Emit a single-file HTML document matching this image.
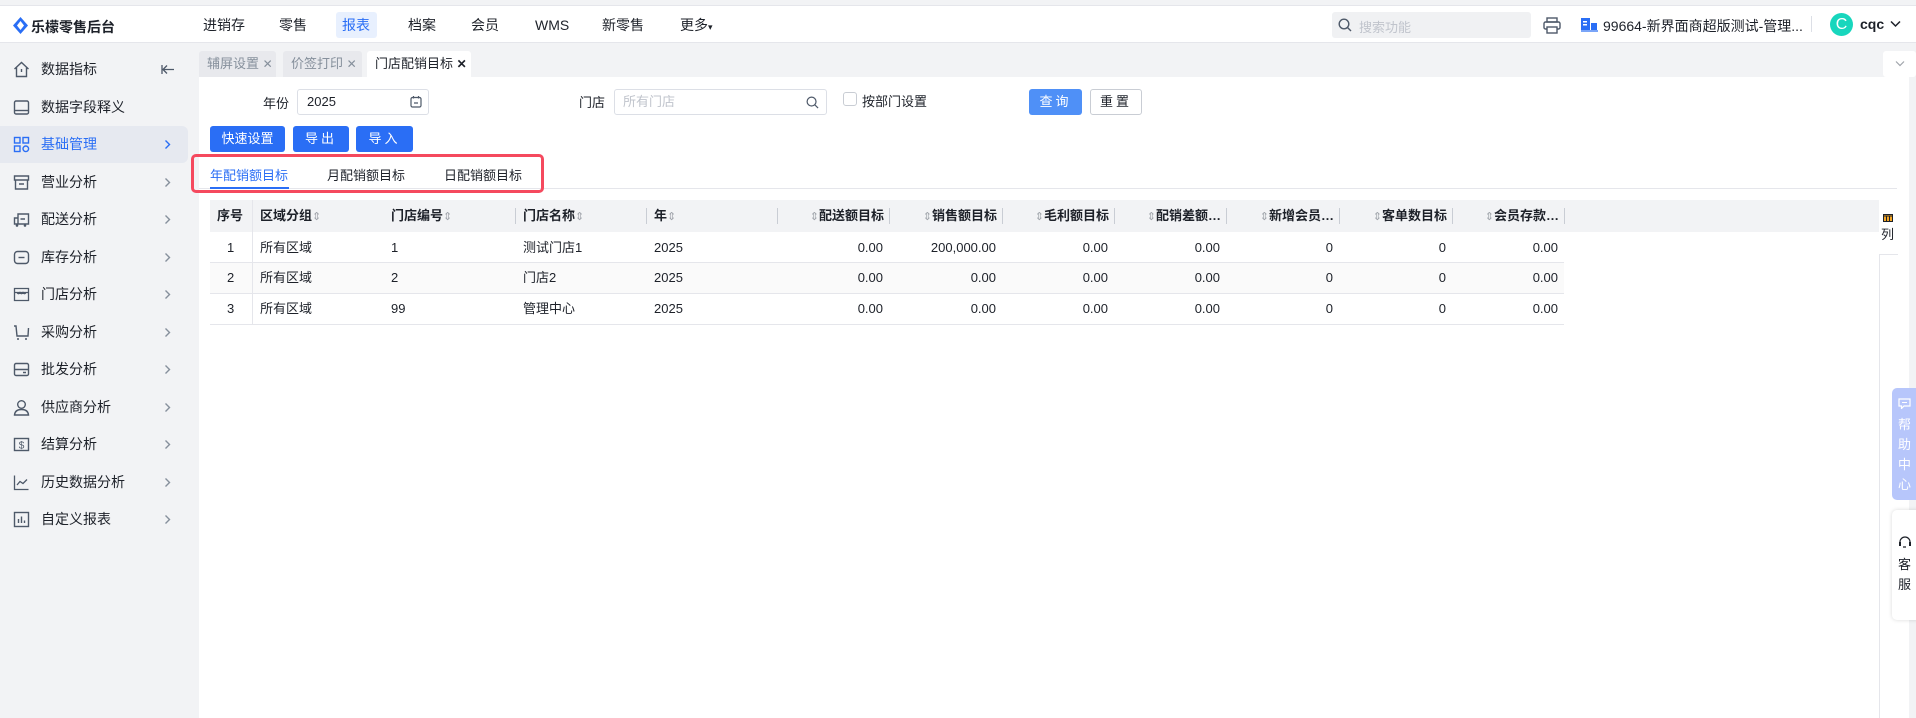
<!DOCTYPE html>
<html><head><meta charset="utf-8"><style>
*{margin:0;padding:0;box-sizing:border-box}
body{width:1916px;height:718px;overflow:hidden;background:#f2f3f5;font-family:"Liberation Sans","Noto Sans CJK SC",sans-serif;color:#1d2129;font-size:13px;position:relative}
.a{position:absolute}
.top{left:0;top:5px;width:1916px;height:38px;background:#fff;border-top:1px solid #e5e6eb;border-bottom:1px solid #e5e6eb}
.nav{top:17px;font-size:14px;color:#1d2129;line-height:16px}
.side{left:0;width:188px;height:37px;font-size:14px;line-height:37px}
.side span.t{position:absolute;left:41px}
.side .ch{position:absolute;left:164px;top:13px;width:7px;height:11px}
.ic{position:absolute;left:13px;top:10px;width:17px;height:17px}
.ptab{top:51px;height:26px;line-height:26px;font-size:13px;padding-left:8px;color:#86909c;background:#e8e9ed;border-radius:3px 3px 0 0}
.btn{top:126px;height:26px;line-height:26px;background:#2a6ef5;color:#fff;border-radius:3px;text-align:center;font-size:13px}
.th{top:200px;height:32px;line-height:32px;font-weight:bold;font-size:13px}
.td{height:31px;line-height:31px;font-size:13px}
.r{text-align:right}
.so{color:#a0a4ab;font-weight:normal;font-size:11px}
.dv{top:208px;width:1px;height:16px;background:#c9cdd4}
</style></head><body>
<svg width="0" height="0" style="position:absolute"><defs><symbol id="chv" viewBox="0 0 7 11"><path d="M1.5 1.5L5.5 5.5 1.5 9.5" fill="none" stroke="#86909c" stroke-width="1.4"/></symbol><symbol id="chvb" viewBox="0 0 7 11"><path d="M1.5 1.5L5.5 5.5 1.5 9.5" fill="none" stroke="#2a6ef5" stroke-width="1.4"/></symbol></defs></svg>
<div class="a top"></div>
<svg class="a" style="left:13px;top:17px" width="15" height="17" viewBox="0 0 15 17"><path d="M7.5 0L15 8.5 7.5 17 0 8.5Z" fill="#2a6ef5"/><path d="M7.5 4L11 8.5 7.5 13 4 8.5Z" fill="#fff"/></svg>
<div class="a" style="left:31px;top:17px;font-size:14px;font-weight:bold;color:#1d2129">乐檬零售后台</div>
<div class="a nav" style="left:203px">进销存</div>
<div class="a nav" style="left:279px">零售</div>
<div class="a" style="left:336px;top:12px;width:41px;height:26px;background:#e8f0fe;border-radius:3px"></div>
<div class="a nav" style="left:342px;color:#2a6ef5">报表</div>
<div class="a nav" style="left:408px">档案</div>
<div class="a nav" style="left:471px">会员</div>
<div class="a nav" style="left:535px">WMS</div>
<div class="a nav" style="left:602px">新零售</div>
<div class="a nav" style="left:680px">更多<span style="font-size:9px">▾</span></div>
<div class="a" style="left:1332px;top:12px;width:199px;height:26px;background:#f0f1f3;border-radius:3px"></div>
<svg class="a" style="left:1338px;top:18px" width="14" height="14" viewBox="0 0 14 14"><circle cx="6" cy="6" r="4.8" fill="none" stroke="#4e5969" stroke-width="1.4"/><path d="M9.5 9.5L13 13" stroke="#4e5969" stroke-width="1.4"/></svg>
<div class="a" style="left:1359px;top:17px;color:#c0c4cc;font-size:13px">搜索功能</div>
<svg class="a" style="left:1543px;top:17px" width="18" height="17" viewBox="0 0 18 17"><rect x="4" y="1" width="10" height="4" fill="none" stroke="#4e5969" stroke-width="1.4"/><rect x="1" y="5" width="16" height="7" rx="1.5" fill="none" stroke="#4e5969" stroke-width="1.4"/><rect x="4" y="10" width="10" height="6" fill="#fff" stroke="#4e5969" stroke-width="1.4"/></svg>
<svg class="a" style="left:1581px;top:18px" width="17" height="14" viewBox="0 0 17 14"><rect x="0" y="0" width="9" height="13" fill="#2a6ef5"/><rect x="10" y="5" width="6" height="8" fill="#2a6ef5"/><rect x="2" y="3" width="4" height="1.5" fill="#fff"/><rect x="2" y="6" width="4" height="1.5" fill="#fff"/><rect x="0" y="12" width="17" height="2" fill="#7aa5f8"/></svg>
<div class="a" style="left:1603px;top:16px;font-size:14px">99664-新界面商超版测试-管理...</div>
<div class="a" style="left:1811px;top:16px;width:1px;height:16px;background:#dcdfe6"></div>
<div class="a" style="left:1830px;top:13px;width:23px;height:23px;border-radius:50%;background:#18d6bd;color:#fff;text-align:center;line-height:23px;font-size:16px">C</div>
<div class="a" style="left:1860px;top:16px;font-size:14px;font-weight:bold">cqc</div>
<svg class="a" style="left:1890px;top:20px" width="11" height="8" viewBox="0 0 11 8"><path d="M1 1.5L5.5 6 10 1.5" fill="none" stroke="#1d2129" stroke-width="1.5"/></svg>

<div class="a side" style="top:51px"><svg class="ic" viewBox="0 0 17 17"><path d="M1.5 8L8.5 1.5 15.5 8M3.5 6.5V15.5H13.5V6.5M8.5 8V11" fill="none" stroke="#4e5969" stroke-width="1.4"/></svg><span class="t">数据指标</span><svg class="a" style="left:161px;top:13px" width="14" height="11" viewBox="0 0 14 11"><path d="M13 5.5H2M6 1.5L2 5.5 6 9.5M1 1V10" fill="none" stroke="#4e5969" stroke-width="1.3"/></svg></div>
<div class="a side" style="top:89px"><svg class="ic" viewBox="0 0 17 17"><rect x="1.5" y="2" width="14" height="13" rx="1.5" fill="none" stroke="#4e5969" stroke-width="1.4"/><path d="M1.5 11.5H15.5" stroke="#4e5969" stroke-width="1.4"/></svg><span class="t">数据字段释义</span></div>
<div class="a side" style="top:126px;background:#e6e9f0;border-radius:0 6px 6px 0;color:#2a6ef5"><svg class="ic" viewBox="0 0 17 17"><g fill="none" stroke="#2a6ef5" stroke-width="1.4"><rect x="1.5" y="1.5" width="5.5" height="5.5"/><rect x="10" y="1.5" width="5.5" height="5.5"/><rect x="1.5" y="10" width="5.5" height="5.5"/><circle cx="12.8" cy="12.8" r="2.8"/></g></svg><span class="t">基础管理</span><svg class="ch"><use href="#chvb"/></svg></div>
<div class="a side" style="top:164px"><svg class="ic" viewBox="0 0 17 17"><path d="M1.5 2H15.5V6H1.5ZM2.5 6V15H14.5V6M6 10H11" fill="none" stroke="#4e5969" stroke-width="1.4"/></svg><span class="t">营业分析</span><svg class="ch"><use href="#chv"/></svg></div>
<div class="a side" style="top:201px"><svg class="ic" viewBox="0 0 17 17"><path d="M5 3H15.5V13H5ZM5 7H1.5V13H5M7.5 8H12" fill="none" stroke="#4e5969" stroke-width="1.4"/><circle cx="4" cy="14.5" r="1.3" fill="#4e5969"/><circle cx="12" cy="14.5" r="1.3" fill="#4e5969"/></svg><span class="t">配送分析</span><svg class="ch"><use href="#chv"/></svg></div>
<div class="a side" style="top:239px"><svg class="ic" viewBox="0 0 17 17"><rect x="1.5" y="2.5" width="14" height="12" rx="3" fill="none" stroke="#4e5969" stroke-width="1.4"/><path d="M5.5 8.5H11.5" stroke="#4e5969" stroke-width="1.4"/></svg><span class="t">库存分析</span><svg class="ch"><use href="#chv"/></svg></div>
<div class="a side" style="top:276px"><svg class="ic" viewBox="0 0 17 17"><path d="M1.5 2.5H15.5V14.5H1.5ZM1.5 6.5H15.5M4 6.5Q5.5 9 7 6.5Q8.5 9 10 6.5Q11.5 9 13 6.5" fill="none" stroke="#4e5969" stroke-width="1.3"/></svg><span class="t">门店分析</span><svg class="ch"><use href="#chv"/></svg></div>
<div class="a side" style="top:314px"><svg class="ic" viewBox="0 0 17 17"><path d="M1 2H3L4 12H15L15.5 4" fill="none" stroke="#4e5969" stroke-width="1.4"/><circle cx="5" cy="15" r="1" fill="#4e5969"/><circle cx="13" cy="15" r="1" fill="#4e5969"/></svg><span class="t">采购分析</span><svg class="ch"><use href="#chv"/></svg></div>
<div class="a side" style="top:351px"><svg class="ic" viewBox="0 0 17 17"><rect x="1.5" y="2.5" width="14" height="12" rx="1.5" fill="none" stroke="#4e5969" stroke-width="1.4"/><path d="M1.5 8.5H15.5M10 11.5H13" stroke="#4e5969" stroke-width="1.4"/></svg><span class="t">批发分析</span><svg class="ch"><use href="#chv"/></svg></div>
<div class="a side" style="top:389px"><svg class="ic" viewBox="0 0 17 17"><circle cx="8.5" cy="5.5" r="3.8" fill="none" stroke="#4e5969" stroke-width="1.4"/><path d="M1.5 16Q2 10.5 8.5 10.5Q15 10.5 15.5 16Z" fill="none" stroke="#4e5969" stroke-width="1.4"/></svg><span class="t">供应商分析</span><svg class="ch"><use href="#chv"/></svg></div>
<div class="a side" style="top:426px"><svg class="ic" viewBox="0 0 17 17"><rect x="1.5" y="2.5" width="14" height="12" fill="none" stroke="#4e5969" stroke-width="1.4"/><text x="8.5" y="12.5" font-size="10" text-anchor="middle" fill="#4e5969" font-family="Liberation Sans">$</text></svg><span class="t">结算分析</span><svg class="ch"><use href="#chv"/></svg></div>
<div class="a side" style="top:464px"><svg class="ic" viewBox="0 0 17 17"><path d="M1.5 1.5V15.5H15.5M4 11L7 7.5 10 9.5 14 5.5" fill="none" stroke="#4e5969" stroke-width="1.3"/></svg><span class="t">历史数据分析</span><svg class="ch"><use href="#chv"/></svg></div>
<div class="a side" style="top:501px"><svg class="ic" viewBox="0 0 17 17"><rect x="1.5" y="1.5" width="14" height="14" fill="none" stroke="#4e5969" stroke-width="1.4"/><path d="M5.5 12V8M8.5 12V5.5M11.5 12V9.5" stroke="#4e5969" stroke-width="1.4"/></svg><span class="t">自定义报表</span><svg class="ch"><use href="#chv"/></svg></div>

<div class="a" style="left:199px;top:77px;width:1710px;height:641px;background:#fff"></div>
<div class="a ptab" style="left:199px;width:77px">辅屏设置 <span style="font-size:12px">✕</span></div>
<div class="a ptab" style="left:283px;width:79px">价签打印 <span style="font-size:12px">✕</span></div>
<div class="a ptab" style="left:367px;width:104px;background:#fff;color:#1d2129">门店配销目标 <b style="font-size:12px">✕</b></div>
<div class="a" style="left:1883px;top:51px;width:33px;height:26px;background:#fff;border-radius:3px"></div>
<svg class="a" style="left:1895px;top:60px" width="10" height="7" viewBox="0 0 10 7"><path d="M1 1.5L5 5.5 9 1.5" fill="none" stroke="#a0a4ab" stroke-width="1.2"/></svg>

<div class="a" style="left:263px;top:93px;font-size:13px">年份</div>
<div class="a" style="left:297px;top:89px;width:132px;height:26px;border:1px solid #dcdfe6;border-radius:3px;padding-left:9px;line-height:24px">2025</div>
<svg class="a" style="left:410px;top:95px" width="12" height="13" viewBox="0 0 12 13"><rect x="1" y="2.5" width="10" height="9.5" rx="1.5" fill="none" stroke="#4e5969" stroke-width="1.2"/><path d="M3.5 1V3.5M8.5 1V3.5M4 8H8" stroke="#4e5969" stroke-width="1.2"/></svg>
<div class="a" style="left:579px;top:92px">门店</div>
<div class="a" style="left:614px;top:89px;width:213px;height:26px;border:1px solid #dcdfe6;border-radius:3px;padding-left:8px;line-height:24px;color:#c0c4cc">所有门店</div>
<svg class="a" style="left:806px;top:96px" width="13" height="13" viewBox="0 0 14 14"><circle cx="6" cy="6" r="4.8" fill="none" stroke="#4e5969" stroke-width="1.3"/><path d="M9.5 9.5L13 13" stroke="#4e5969" stroke-width="1.3"/></svg>
<div class="a" style="left:843px;top:92px;width:14px;height:14px;border:1px solid #c9cdd4;border-radius:3px"></div>
<div class="a" style="left:862px;top:91px">按部门设置</div>
<div class="a" style="left:1029px;top:89px;width:53px;height:26px;background:#4f90f7;color:#fff;border-radius:3px;text-align:center;line-height:26px;letter-spacing:3px">查询</div>
<div class="a" style="left:1090px;top:89px;width:52px;height:26px;border:1px solid #c9cdd4;border-radius:3px;text-align:center;line-height:24px;letter-spacing:3px">重置</div>

<div class="a btn" style="left:210px;width:75px">快速设置</div>
<div class="a btn" style="left:293px;width:56px;letter-spacing:3px">导出</div>
<div class="a btn" style="left:356px;width:57px;letter-spacing:3px">导入</div>

<div class="a" style="left:199px;top:188px;width:1698px;height:1px;background:#e5e6eb"></div>
<div class="a" style="left:210px;top:165px;font-size:13px;color:#2a6ef5">年配销额目标</div>
<div class="a" style="left:210px;top:187px;width:79px;height:2px;background:#2a6ef5"></div>
<div class="a" style="left:327px;top:165px">月配销额目标</div>
<div class="a" style="left:444px;top:165px">日配销额目标</div>
<div class="a" style="left:191px;top:154px;width:353px;height:39px;border:3px solid #f5495e;border-radius:5px"></div>

<div class="a" style="left:210px;top:200px;width:1669px;height:32px;background:#f2f3f5"></div>
<div class="a" style="left:210px;top:262px;width:1354px;height:31px;background:#fafafa"></div>
<div class="a" style="left:210px;top:262px;width:1354px;height:1px;background:#e5e6eb"></div>
<div class="a" style="left:210px;top:293px;width:1354px;height:1px;background:#e5e6eb"></div>
<div class="a" style="left:210px;top:324px;width:1354px;height:1px;background:#e5e6eb"></div>
<div class="a" style="left:252px;top:200px;width:1px;height:124px;background:#e5e6eb"></div>
<div class="a dv" style="left:515px"></div><div class="a dv" style="left:646px"></div><div class="a dv" style="left:777px"></div>
<div class="a dv" style="left:889px"></div><div class="a dv" style="left:1002px"></div><div class="a dv" style="left:1114px"></div><div class="a dv" style="left:1226px"></div><div class="a dv" style="left:1339px"></div><div class="a dv" style="left:1452px"></div><div class="a dv" style="left:1564px"></div>

<div class="a th" style="left:217px">序号</div>
<div class="a th" style="left:260px">区域分组<span class="so">⇕</span></div>
<div class="a th" style="left:391px">门店编号<span class="so">⇕</span></div>
<div class="a th" style="left:523px">门店名称<span class="so">⇕</span></div>
<div class="a th" style="left:654px">年<span class="so">⇕</span></div>
<div class="a th r" style="left:777px;width:107px"><span class="so">⇕</span>配送额目标</div>
<div class="a th r" style="left:889px;width:108px"><span class="so">⇕</span>销售额目标</div>
<div class="a th r" style="left:1002px;width:107px"><span class="so">⇕</span>毛利额目标</div>
<div class="a th r" style="left:1114px;width:107px"><span class="so">⇕</span>配销差额…</div>
<div class="a th r" style="left:1226px;width:108px"><span class="so">⇕</span>新增会员…</div>
<div class="a th r" style="left:1339px;width:108px"><span class="so">⇕</span>客单数目标</div>
<div class="a th r" style="left:1452px;width:107px"><span class="so">⇕</span>会员存款…</div>

<div class="a" style="left:0;top:232px;width:1916px">
<div class="a td" style="left:227px">1</div><div class="a td" style="left:260px">所有区域</div><div class="a td" style="left:391px">1</div><div class="a td" style="left:523px">测试门店1</div><div class="a td" style="left:654px">2025</div>
<div class="a td r" style="left:777px;width:106px">0.00</div><div class="a td r" style="left:889px;width:107px">200,000.00</div><div class="a td r" style="left:1002px;width:106px">0.00</div><div class="a td r" style="left:1114px;width:106px">0.00</div><div class="a td r" style="left:1226px;width:107px">0</div><div class="a td r" style="left:1339px;width:107px">0</div><div class="a td r" style="left:1452px;width:106px">0.00</div>
</div>
<div class="a" style="left:0;top:262px;width:1916px">
<div class="a td" style="left:227px">2</div><div class="a td" style="left:260px">所有区域</div><div class="a td" style="left:391px">2</div><div class="a td" style="left:523px">门店2</div><div class="a td" style="left:654px">2025</div>
<div class="a td r" style="left:777px;width:106px">0.00</div><div class="a td r" style="left:889px;width:107px">0.00</div><div class="a td r" style="left:1002px;width:106px">0.00</div><div class="a td r" style="left:1114px;width:106px">0.00</div><div class="a td r" style="left:1226px;width:107px">0</div><div class="a td r" style="left:1339px;width:107px">0</div><div class="a td r" style="left:1452px;width:106px">0.00</div>
</div>
<div class="a" style="left:0;top:293px;width:1916px">
<div class="a td" style="left:227px">3</div><div class="a td" style="left:260px">所有区域</div><div class="a td" style="left:391px">99</div><div class="a td" style="left:523px">管理中心</div><div class="a td" style="left:654px">2025</div>
<div class="a td r" style="left:777px;width:106px">0.00</div><div class="a td r" style="left:889px;width:107px">0.00</div><div class="a td r" style="left:1002px;width:106px">0.00</div><div class="a td r" style="left:1114px;width:106px">0.00</div><div class="a td r" style="left:1226px;width:107px">0</div><div class="a td r" style="left:1339px;width:107px">0</div><div class="a td r" style="left:1452px;width:106px">0.00</div>
</div>

<div class="a" style="left:1879px;top:200px;width:19px;height:55px;background:#fff;border-bottom:1px solid #e5e6eb"></div>
<svg class="a" style="left:1883px;top:214px" width="10" height="8" viewBox="0 0 10 8"><rect x="0.5" y="0.5" width="9" height="7" fill="#f5a623" stroke="#1d2129"/><path d="M0.5 2H9.5M3.5 2V8M6.5 2V8" stroke="#1d2129"/></svg>
<div class="a" style="left:1881px;top:224px;font-size:13px">列</div>
<div class="a" style="left:1879px;top:255px;width:1px;height:463px;background:#e5e6eb"></div>
<div class="a" style="left:1909px;top:77px;width:7px;height:641px;background:#f2f3f5"></div>
<div class="a" style="left:1892px;top:388px;width:30px;height:112px;background:#b7c6fb;border-radius:5px;color:#fff;font-size:13px;line-height:20px;padding:7px 0 0 6px">
<svg width="13" height="11" viewBox="0 0 13 11"><path d="M1 1H12V8H6L3.5 10.5V8H1Z" fill="none" stroke="#fff" stroke-width="1.2"/><path d="M4 4.5H9" stroke="#fff"/></svg><br>帮<br>助<br>中<br>心</div>
<div class="a" style="left:1892px;top:510px;width:30px;height:110px;background:#fff;border-radius:5px;box-shadow:0 0 4px rgba(0,0,0,.15);font-size:13px;line-height:20px;padding:25px 0 0 6px">
<svg width="14" height="13" viewBox="0 0 14 13"><path d="M2 8V6A5 5 0 0 1 12 6V8M5 11H8" fill="none" stroke="#1d2129" stroke-width="1.2"/><rect x="1" y="6" width="2" height="4" fill="#1d2129"/><rect x="11" y="6" width="2" height="4" fill="#1d2129"/></svg><br>客<br>服</div>
</body></html>
